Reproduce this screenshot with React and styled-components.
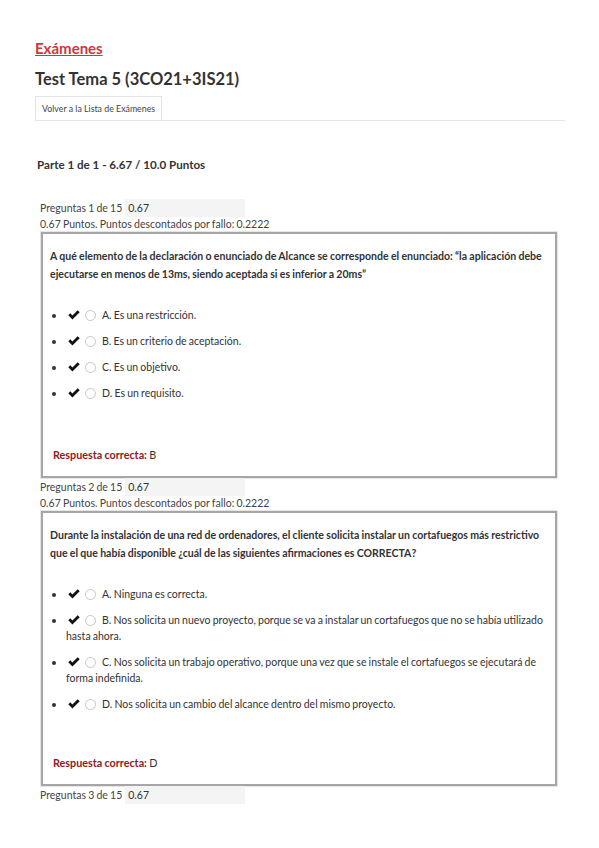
import React from "react";
import styled, { createGlobalStyle } from "styled-components";

const Global = createGlobalStyle`
  html, body { margin: 0; padding: 0; background: #fff; }
  body { font-family: Lato, "Open Sans", sans-serif; color: #333; }
`;

const Page = styled.div`
  padding: 38px 34px 0 35px;
  width: 599px;
  box-sizing: border-box;
`;

const Crumb = styled.a`
  display: inline-block;
  color: #d0353b;
  font-size: 15px;
  font-weight: 700;
  text-decoration: underline;
  line-height: 20px;
`;

const Title = styled.h1`
  margin: 9px 0 0;
  font-size: 16.5px;
  font-weight: 700;
  color: #333;
  line-height: 24px;
`;

const TabBar = styled.div`
  margin-top: 5px;
  border-bottom: 1px solid #e4e4e4;
  display: flex;
  width: 530px;
`;

const Tab = styled.div`
  border: 1px solid #e4e4e4;
  border-bottom: none;
  height: 23px;
  padding: 0 6px;
  display: flex;
  align-items: center;
  font-size: 8.8px;
  color: #444;
`;

const Part = styled.h2`
  margin: 36px 0 0 2px;
  font-size: 11.6px;
  font-weight: 700;
  color: #333;
  line-height: 16px;
`;

const QHead = styled.div`
  margin-left: 5px;
  margin-top: ${p => p.$first ? "26px" : "0"};
  font-size: 10.5px;
  color: #444;
  word-spacing: -0.5px;
`;

const ScoreRow = styled.div`
  display: flex;
  align-items: center;
  height: 18px;
  gap: 3px;
`;

const ScoreBox = styled.div`
  width: 117px;
  height: 18px;
  background: #f4f4f4;
  display: flex;
  align-items: center;
  padding-left: 3px;
  color: #333;
`;

const Meta = styled.div`
  height: 15px;
  line-height: 15px;
`;

const Card = styled.div`
  margin: 0 0 0 6px;
  width: 516px;
  box-sizing: border-box;
  height: ${p => p.$h}px;
  border: 2px solid #a6a6a6;
  box-shadow: 0 0 0 1px #e6e6e6;
  padding: 14px 6px 0 7px;
  display: flex;
  flex-direction: column;
`;

const QText = styled.div`
  font-size: 10.55px;
  font-weight: 700;
  color: #333;
  line-height: 17.5px;
  word-spacing: -0.3px;
`;

const Options = styled.ul`
  list-style: disc outside;
  margin: 24px 0 0;
  padding: 0 0 0 16px;
  display: flex;
  flex-direction: column;
  gap: 10px;
`;

const Option = styled.li`
  font-size: 10.5px;
  color: #333;
  line-height: 16px;
  word-spacing: -0.5px;
  &::marker { font-size: 11px; }
`;

const Check = styled.svg`
  display: inline-block;
  width: 12px;
  height: 10px;
  margin: 0 5px 0 2px;
  vertical-align: -1px;
`;

const Radio = styled.span`
  display: inline-block;
  width: 11px;
  height: 11px;
  border-radius: 50%;
  border: 1px solid #c8c8c8;
  margin: 0 6px 0 0;
  box-sizing: border-box;
  vertical-align: -2px;
`;

const Answer = styled.div`
  margin-top: auto;
  margin-bottom: 15px;
  padding-left: 3px;
  font-size: 10.8px;
  color: #333;
  word-spacing: -0.5px;
`;

const AnswerLabel = styled.span`
  color: #8e1b1b;
  font-weight: 700;
`;

const CheckIcon = () => (
  <Check viewBox="0 0 12 10">
    <path d="M0.3 5.3 L2.3 3.3 L4.4 5.4 L9.7 0.2 L11.7 2.2 L4.4 9.4 Z" fill="#111" />
  </Check>
);

const Question = ({ n, first, height, text, options, answer }) => (
  <>
    <QHead $first={first}>
      <ScoreRow>
        <span>Preguntas {n} de 15</span>
        <ScoreBox>0.67</ScoreBox>
      </ScoreRow>
      {options && <Meta>0.67 Puntos. Puntos descontados por fallo: 0.2222</Meta>}
    </QHead>
    {options && (
      <Card $h={height}>
        <QText>{text}</QText>
        <Options>
          {options.map((o, i) => (
            <Option key={i}>
              <CheckIcon />
              <Radio />
              {o}
            </Option>
          ))}
        </Options>
        <Answer>
          <AnswerLabel>Respuesta correcta:</AnswerLabel> {answer}
        </Answer>
      </Card>
    )}
  </>
);

export default function App() {
  return (
    <>
      <Global />
      <Page>
        <Crumb>Exámenes</Crumb>
        <Title>Test Tema 5 (3CO21+3IS21)</Title>
        <TabBar>
          <Tab>Volver a la Lista de Exámenes</Tab>
        </TabBar>
        <Part>Parte 1 de 1 - 6.67 / 10.0 Puntos</Part>
        <Question
          n={1}
          first
          height={246}
          text={"A qué elemento de la declaración o enunciado de Alcance se corresponde el enunciado: “la aplicación debe ejecutarse en menos de 13ms, siendo aceptada si es inferior a 20ms”"}
          options={[
            "A. Es una restricción.",
            "B. Es un criterio de aceptación.",
            "C. Es un objetivo.",
            "D. Es un requisito.",
          ]}
          answer="B"
        />
        <Question
          n={2}
          height={275}
          text={"Durante la instalación de una red de ordenadores, el cliente solicita instalar un cortafuegos más restrictivo que el que había disponible ¿cuál de las siguientes afirmaciones es CORRECTA?"}
          options={[
            "A. Ninguna es correcta.",
            "B. Nos solicita un nuevo proyecto, porque se va a instalar un cortafuegos que no se había utilizado hasta ahora.",
            "C. Nos solicita un trabajo operativo, porque una vez que se instale el cortafuegos se ejecutará de forma indefinida.",
            "D. Nos solicita un cambio del alcance dentro del mismo proyecto.",
          ]}
          answer="D"
        />
        <Question n={3} />
      </Page>
    </>
  );
}
